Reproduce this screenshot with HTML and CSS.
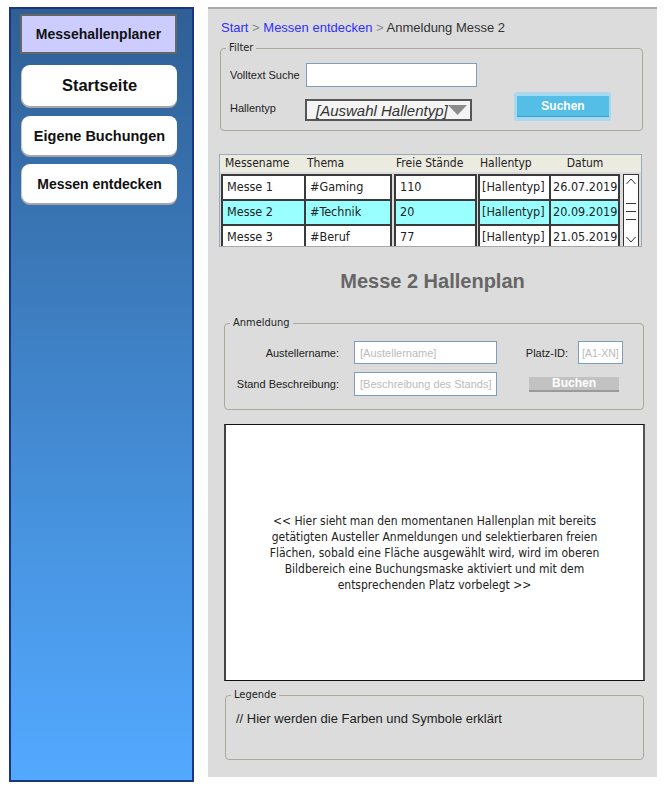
FILE: index.html
```html
<!DOCTYPE html>
<html lang="de">
<head>
<meta charset="utf-8">
<title>Messehallenplaner</title>
<link rel="stylesheet" href="styles.css">
</head>
<body>
<div class="page">
  <nav class="sidebar">
    <div class="brand">Messehallenplaner</div>
    <a class="navbtn nav-start">Startseite</a>
    <a class="navbtn nav-own">Eigene Buchungen</a>
    <a class="navbtn nav-disc">Messen entdecken</a>
  </nav>

  <main class="main">
    <div class="crumbs"><span class="link">Start</span> <span class="sep">&gt;</span> <span class="link">Messen entdecken</span> <span class="sep">&gt;</span> Anmeldung Messe 2</div>

    <section class="group filter">
      <span class="legend">Filter</span>
      <div class="frow">
        <span class="flabel">Volltext Suche</span>
        <div class="textbox fulltext"></div>
      </div>
      <div class="frow row2">
        <span class="flabel lbl2">Hallentyp</span>
        <div class="select">
          <span class="select-text">[Auswahl Hallentyp]</span>
          <svg class="select-arrow" width="19" height="10" viewBox="0 0 19 10"><polygon points="0,0 19,0 9.5,10" fill="#8c8c8c"/></svg>
        </div>
        <div class="search-glow"><div class="search">Suchen</div></div>
      </div>
    </section>

    <section class="table">
      <div class="thead">
        <span class="th c1">Messename</span>
        <span class="th c2">Thema</span>
        <span class="th c3">Freie Stände</span>
        <span class="th c4">Hallentyp</span>
        <span class="th c5">Datum</span>
      </div>
      <div class="tbody">
        <div class="rows">
          <div class="tr">
            <span class="td c1 first">Messe 1</span>
            <span class="td c2">#Gaming</span>
            <span class="td c3">110</span>
            <span class="td c4">[Hallentyp]</span>
            <span class="td c5">26.07.2019</span>
          </div>
          <div class="tr sel">
            <span class="td c1 first">Messe 2</span>
            <span class="td c2">#Technik</span>
            <span class="td c3">20</span>
            <span class="td c4">[Hallentyp]</span>
            <span class="td c5">20.09.2019</span>
          </div>
          <div class="tr">
            <span class="td c1 first">Messe 3</span>
            <span class="td c2">#Beruf</span>
            <span class="td c3">77</span>
            <span class="td c4">[Hallentyp]</span>
            <span class="td c5">21.05.2019</span>
          </div>
        </div>
        <div class="scroll">
          <svg width="14" height="72" viewBox="0 0 14 72">
            <polyline points="2.5,9 7,4 11.5,9" fill="none" stroke="#333" stroke-width="1"/>
            <line x1="2" y1="28.5" x2="12" y2="28.5" stroke="#333" stroke-width="1"/>
            <line x1="2" y1="36.5" x2="12" y2="36.5" stroke="#333" stroke-width="1"/>
            <line x1="2" y1="44.5" x2="12" y2="44.5" stroke="#333" stroke-width="1"/>
            <polyline points="2.5,62 7,67 11.5,62" fill="none" stroke="#333" stroke-width="1"/>
          </svg>
        </div>
      </div>
    </section>

    <h1 class="title">Messe 2 Hallenplan</h1>

    <section class="group booking">
      <span class="legend">Anmeldung</span>
      <div class="bgrid">
        <span class="blabel">Austellername:</span>
        <div class="textbox ph">[Austellername]</div>
        <span class="blabel pl">Platz-ID:</span>
        <div class="textbox ph small">[A1-XN]</div>
        <span class="blabel">Stand Beschreibung:</span>
        <div class="textbox ph">[Beschreibung des Stands]</div>
        <div class="book">Buchen</div>
      </div>
    </section>

    <section class="plan">
      <p class="plan-text">&lt;&lt; Hier sieht man den momentanen Hallenplan mit bereits<br>getätigten Austeller Anmeldungen und selektierbaren freien<br>Flächen, sobald eine Fläche ausgewählt wird, wird im oberen<br>Bildbereich eine Buchungsmaske aktiviert und mit dem<br>entsprechenden Platz vorbelegt &gt;&gt;</p>
    </section>

    <section class="group legende">
      <span class="legend">Legende</span>
      <p class="legend-text">// Hier werden die Farben und Symbole erklärt</p>
    </section>
  </main>
</div>
</body>
</html>
```

FILE: styles.css
```css
* { box-sizing: border-box; }
html, body { margin: 0; padding: 0; background: #ffffff; }
body { font-family: "Liberation Sans", Arial, sans-serif; color: #222; }

.page {
  display: flex;
  align-items: flex-start;
  padding: 7px 0 0 9px;
  gap: 14px;
}

/* Sidebar */
.sidebar {
  width: 185px;
  height: 775px;
  border: 2px solid #1b3484;
  background: linear-gradient(to bottom, #2f5f95 0%, #4895e2 70%, #53a9ff 100%);
  display: flex;
  flex-direction: column;
  padding: 5px 0 0 9px;
}
.brand {
  width: 157px;
  height: 40px;
  background: #ccccff;
  border: 2px solid #666;
  font-weight: bold;
  font-size: 14px;
  color: #111;
  display: flex;
  align-items: center;
  justify-content: center;
}
.navbtn {
  width: 155px;
  margin-left: 2px;
  background: #fff;
  border-radius: 8px;
  box-shadow: 0 2px 0 #a6a6a6, -1px 1px 0 #c8c8c8;
  font-weight: bold;
  color: #111;
  display: flex;
  align-items: center;
  justify-content: center;
}
.nav-start { height: 41px; margin-top: 11px; font-size: 16.5px; }
.nav-own { height: 39px; margin-top: 10px; font-size: 14.5px; }
.nav-disc { height: 39px; margin-top: 9px; font-size: 14px; }

/* Main */
.main {
  width: 449px;
  height: 770px;
  background: #dcdcdc;
  border-top: 2px solid #ababab;
  padding: 11px 0 0 12px;
  display: flex;
  flex-direction: column;
  align-items: flex-start;
}
.crumbs {
  margin-left: 1px;
  font-size: 13px;
  line-height: 16px;
  color: #333;
}
.crumbs .link { color: #3030ff; }
.crumbs .sep { color: #888; }

.group {
  position: relative;
  border: 1px solid #aca899;
  border-radius: 4px;
}
.legend {
  position: absolute;
  top: -8px;
  left: 5px;
  padding: 0 3px;
  background: #dcdcdc;
  font-family: "DejaVu Sans Condensed", "Liberation Sans", sans-serif;
  font-size: 11px;
  line-height: 14px;
  color: #222;
}

/* Filter */
.filter {
  margin-top: 12px;
  width: 423px;
  height: 83px;
  padding: 14px 0 0 9px;
}
.frow { display: flex; align-items: flex-start; }
.flabel {
  width: 76px;
  font-family: "Liberation Sans", sans-serif;
  font-size: 11px;
  line-height: 24px;
  color: #222;
}
.textbox {
  background: #fff;
  border: 1px solid #7f9db9;
}
.fulltext { width: 171px; height: 24px; }
.row2 { margin-top: 5px; }
.lbl2 { width: 75px; margin-top: 4px; }
.select {
  margin-top: 7px;
  width: 167px;
  height: 22px;
  border: 2px solid #555;
  background: #f4f4f4;
  display: flex;
  align-items: center;
  padding-left: 9px;
}
.select-text {
  font-style: italic;
  font-size: 15px;
  color: #333;
  white-space: nowrap;
}
.select-arrow { margin-left: 0; flex: none; }
.search-glow {
  margin-left: 42px;
  width: 97px;
  height: 29px;
  background: #a9d9ee;
  border-radius: 3px;
  padding: 4px 2px 4px 3px;
}
.search {
  width: 92px;
  height: 21px;
  background: #55bee6;
  border-bottom: 1px solid #3d9ec4;
  color: #fff;
  font-weight: bold;
  font-size: 12px;
  display: flex;
  align-items: center;
  justify-content: center;
}

/* Table */
.table {
  margin-top: 23px;
  margin-left: -1px;
  width: 423px;
  height: 93px;
  border: 1px solid #9aabbd;
  border-bottom-color: #a8a8a8;
  background: #dcdcdc;
  overflow: hidden;
}
.thead {
  height: 17px;
  background: #ecebdf;
  display: flex;
  padding-left: 5px;
  font-family: "DejaVu Sans Condensed", "DejaVu Sans", sans-serif;
  font-size: 12px;
  line-height: 17px;
  color: #222;
}
.th.c1 { width: 82px; }
.th.c2 { width: 89px; }
.th.c3 { width: 84px; }
.th.c4 { width: 72px; }
.th.c5 { width: 66px; text-align: center; }
.tbody {
  display: flex;
  padding: 2px 0 0 1px;
}
.rows { display: flex; flex-direction: column; }
.tr {
  display: grid;
  grid-template-columns: 85px 86px 2px 83px 1px 73px 69px;
  height: 27px;
  margin-top: -2px;
  background: transparent;
}
.tr:first-child { margin-top: 0; }
.td {
  border: 2px solid #3a3a3a;
  margin-left: -2px;
  background: #fff;
  font-family: "DejaVu Sans Condensed", "DejaVu Sans", sans-serif;
  font-size: 12.5px;
  line-height: 22px;
  padding-left: 4px;
  color: #222;
  white-space: nowrap;
  overflow: hidden;
}
.td.first { margin-left: 0; }
.td.c3 { grid-column: 4; margin-left: 0; }
.td.c4 { grid-column: 6; margin-left: 0; padding-left: 2px; }
.td.c5 { grid-column: 7; padding-left: 2px; }
.tr.sel .td { background: #99ffff; }
.scroll {
  margin-left: 3px;
  width: 16px;
  height: 74px;
  border: 1px solid #333;
  background: #fff;
}
.scroll svg { display: block; }

/* Title */
.title {
  align-self: center;
  margin: 22px 0 0 -12px;
  font-size: 20px;
  line-height: 24px;
  font-weight: bold;
  color: #666;
}

/* Booking */
.booking {
  margin-top: 30px;
  margin-left: 4px;
  width: 420px;
  height: 87px;
  padding-top: 17px;
}
.bgrid {
  display: grid;
  grid-template-columns: 129px 143px 81px 45px;
  grid-template-rows: 23px 24px;
  row-gap: 8px;
  align-items: center;
}
.blabel {
  text-align: right;
  padding-right: 15px;
  font-size: 11px;
  color: #222;
}
.blabel.pl { padding-right: 10px; }
.bgrid .textbox { height: 100%; }
.ph {
  font-family: "Liberation Sans", sans-serif;
  font-size: 11px;
  color: #bbb;
  padding-left: 5px;
  display: flex;
  align-items: center;
  white-space: nowrap;
  overflow: hidden;
}
.ph.small { padding-left: 3px; font-size: 10.5px; }
.book {
  grid-column: 3 / 5;
  margin-left: 32px;
  width: 90px;
  height: 15px;
  background: #c2c2c2;
  border-bottom: 2px solid #9a9a9a;
  color: #fff;
  font-weight: bold;
  font-size: 12px;
  display: flex;
  align-items: center;
  justify-content: center;
}

/* Plan */
.plan {
  margin-top: 14px;
  margin-left: 4px;
  width: 421px;
  height: 257px;
  background: #fff;
  border: 1px solid #111;
  border-left: 2px solid #444;
  border-right: 2px solid #555;
  display: flex;
  align-items: center;
  justify-content: center;
}
.plan-text {
  margin: 0;
  text-align: center;
  font-family: "DejaVu Sans Condensed", "DejaVu Sans", sans-serif;
  font-size: 12px;
  line-height: 16px;
  color: #222;
}

/* Legende */
.legende {
  margin-top: 14px;
  margin-left: 5px;
  width: 419px;
  height: 65px;
  padding: 15px 0 0 10px;
}
.legend-text {
  margin: 0;
  font-size: 13px;
  line-height: 16px;
  color: #222;
}
```
